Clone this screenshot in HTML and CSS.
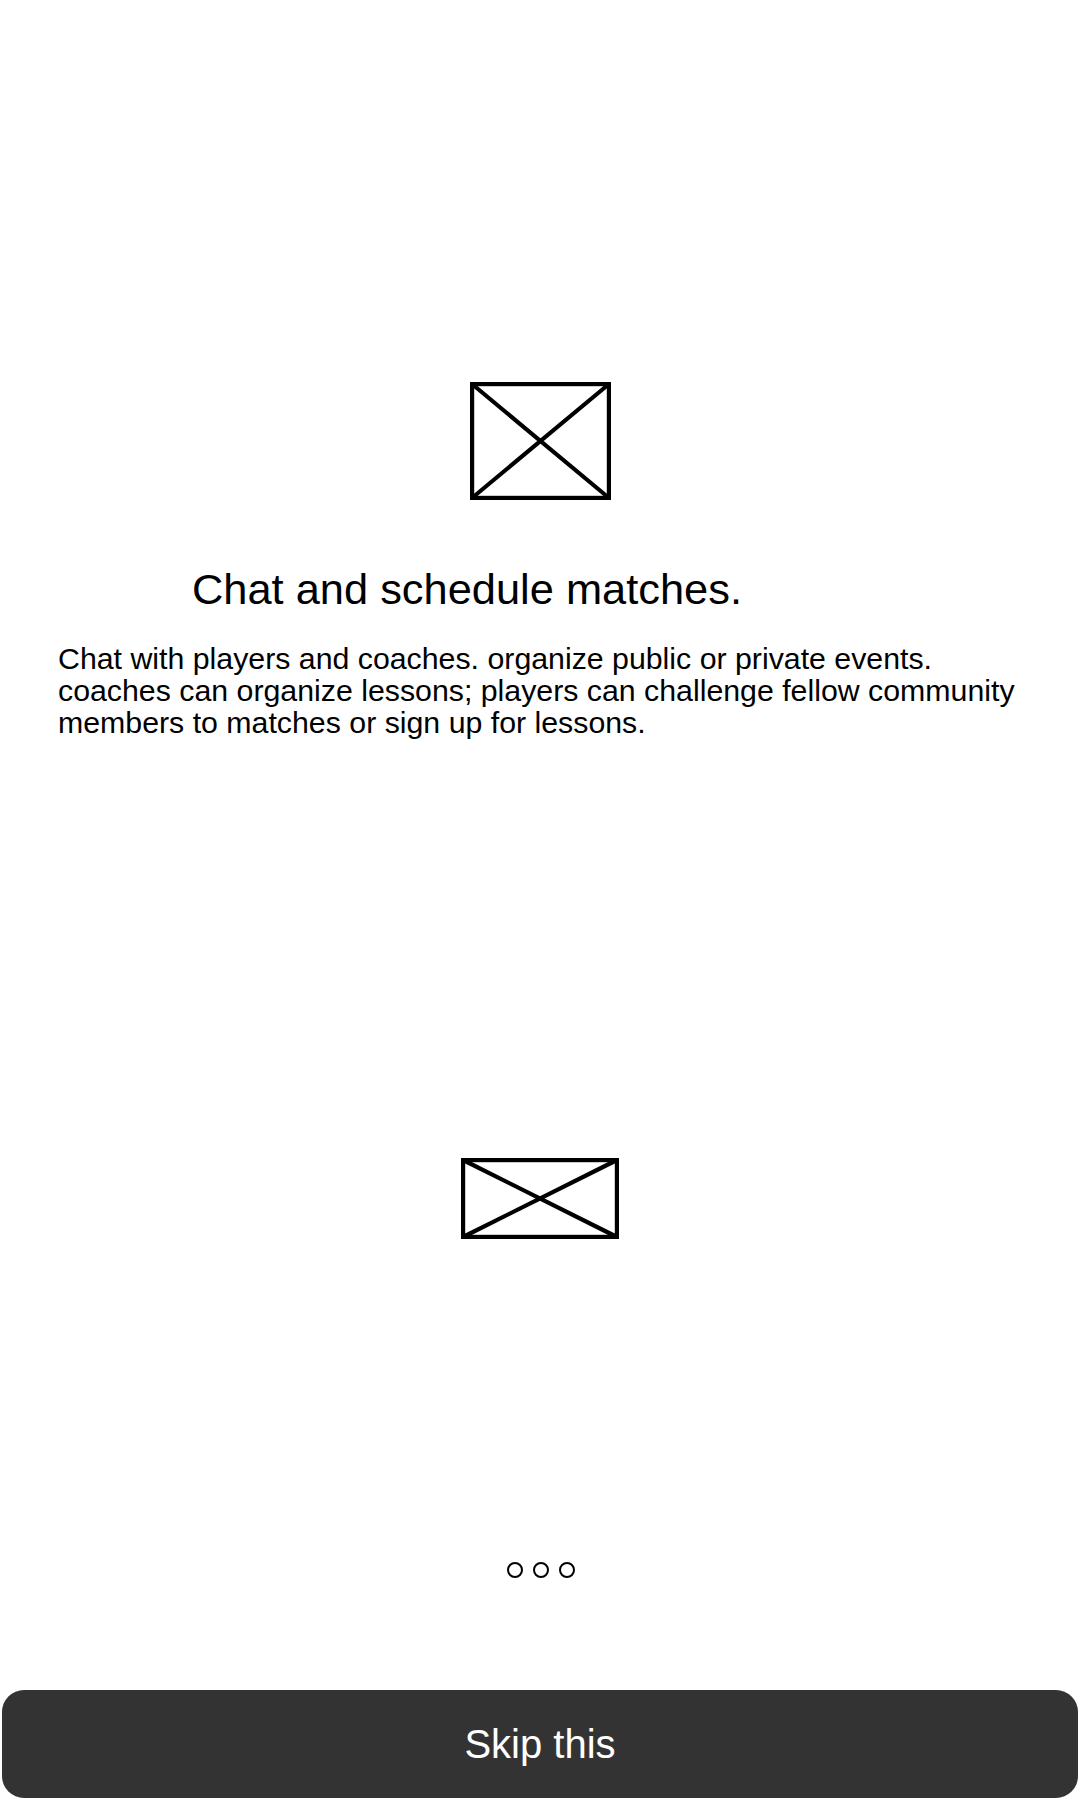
FILE: index.html
```html
<!DOCTYPE html>
<html lang="en">
<head>
<meta charset="utf-8">
<title>Onboarding</title>
<link rel="stylesheet" href="styles.css">
</head>
<body>
<main class="screen">
  <section class="slide">
    <svg class="placeholder placeholder--hero" width="141" height="118" viewBox="0 0 141 118" aria-hidden="true">
      <rect x="2" y="2" width="137" height="114" fill="none" stroke="#000" stroke-width="4.4"/>
      <path d="M2 2 L139 116 M139 2 L2 116" stroke="#000" stroke-width="4.2" fill="none"/>
    </svg>
    <h1 class="title">Chat and schedule matches.</h1>
    <p class="desc">Chat with players and coaches. organize public or private events. coaches can organize lessons; players can challenge fellow community members to matches or sign up for lessons.</p>
  </section>
  <div class="media">
    <svg class="placeholder placeholder--wide" width="158" height="81" viewBox="0 0 158 81" aria-hidden="true">
      <rect x="2" y="2" width="154" height="77" fill="none" stroke="#000" stroke-width="4.4"/>
      <path d="M2 2 L156 79 M156 2 L2 79" stroke="#000" stroke-width="4.2" fill="none"/>
    </svg>
  </div>
  <div class="dots">
    <span class="dot"></span>
    <span class="dot"></span>
    <span class="dot"></span>
  </div>
  <button class="skip" type="button">Skip this</button>
</main>
</body>
</html>
```

FILE: styles.css
```css
html, body {
  margin: 0;
  padding: 0;
  background: #ffffff;
}

body {
  font-family: "Liberation Sans", Arial, sans-serif;
  color: #000000;
}

.screen {
  width: 1080px;
  height: 1800px;
  padding-top: 382px;
  box-sizing: border-box;
  display: flex;
  flex-direction: column;
}

.slide {
  display: flex;
  flex-direction: column;
}

.placeholder {
  display: block;
  margin: 0 auto;
}

.title {
  margin: 64px 0 0 192px;
  font-size: 43.4px;
  line-height: 50px;
  font-weight: 400;
}

.desc {
  margin: 29px 0 0 0;
  padding: 0 40px 0 58px;
  font-size: 30.3px;
  line-height: 32px;
}

.media {
  margin-top: 419px;
}

.dots {
  margin-top: 323px;
  display: flex;
  justify-content: center;
  gap: 10px;
  padding-left: 1px;
}

.dot {
  width: 16px;
  height: 16px;
  box-sizing: border-box;
  border: 2.8px solid #000;
  border-radius: 50%;
}

.skip {
  margin: 112px 0 0 2px;
  width: 1076px;
  height: 108px;
  border: 0;
  border-radius: 22px;
  background: #333333;
  color: #ffffff;
  font-family: "Liberation Sans", Arial, sans-serif;
  font-size: 40px;
  padding: 0;
  cursor: pointer;
}
```
